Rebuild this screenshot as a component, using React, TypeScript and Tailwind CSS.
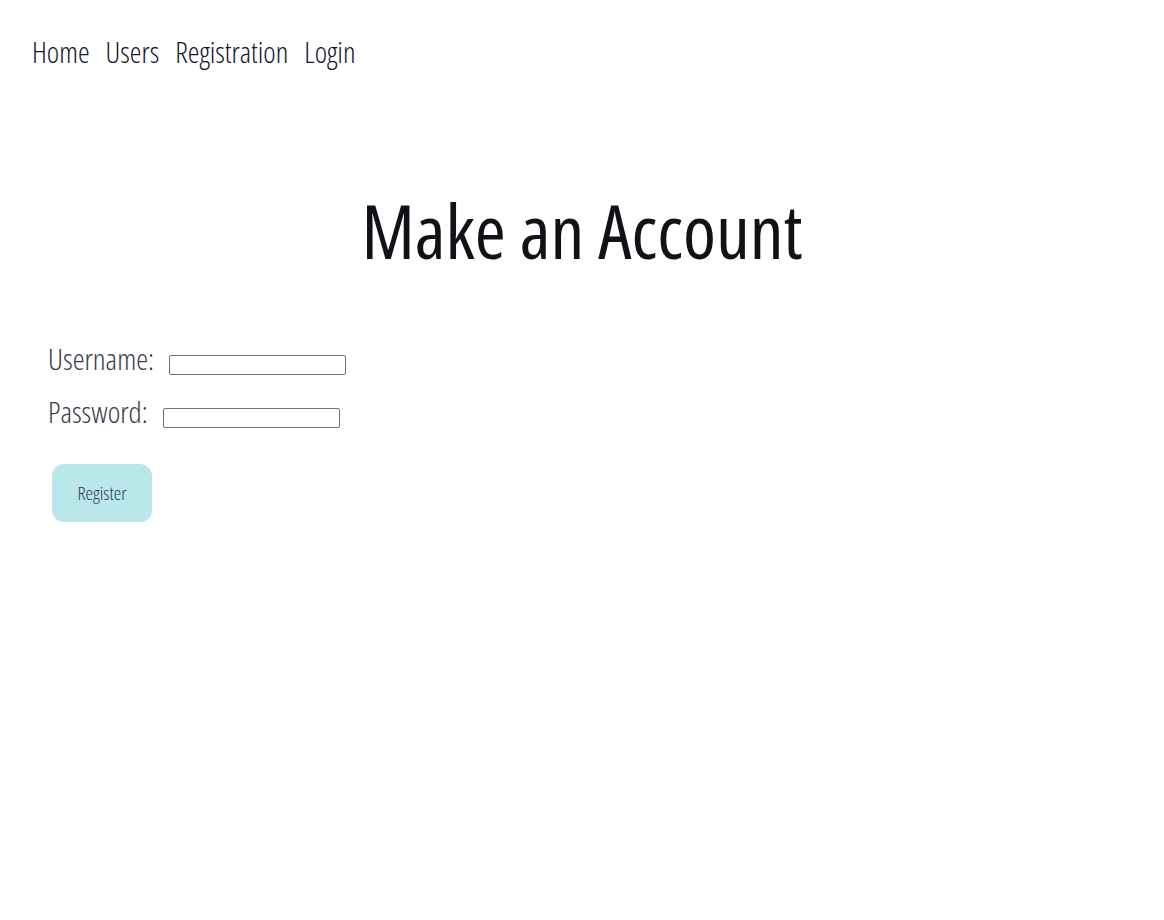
export default function App() {
  return (
    <div className="min-h-screen bg-white font-['Open_Sans',sans-serif] font-light font-stretch-condensed">
      <nav className="flex gap-4 pl-8 pt-[30px] text-[29.5px] text-[#14142b]">
        <a href="#">Home</a>
        <a href="#">Users</a>
        <a href="#">Registration</a>
        <a href="#">Login</a>
      </nav>
      <h1 className="mt-[100px] text-center text-[75px] font-normal text-[#111118]">Make an Account</h1>
      <form className="mt-[49px] pl-12 text-[#3a3a4a]">
        <div className="flex items-center gap-[15px] text-[30px]">
          <label className="mb-[6px]">Username:</label>
          <input className="mt-2 h-5 w-[177px] rounded-[2px] border border-gray-500" />
        </div>
        <div className="mt-[2px] flex items-center gap-[15px] text-[30px]">
          <label className="mb-[6px]">Password:</label>
          <input type="password" className="mt-2 h-5 w-[177px] rounded-[2px] border border-gray-500" />
        </div>
        <button type="button" className="mt-[24px] ml-1 h-[58px] w-[100px] rounded-xl bg-[#bae8ea] text-[19px] text-[#2a3550]">
          Register
        </button>
      </form>
    </div>
  );
}
